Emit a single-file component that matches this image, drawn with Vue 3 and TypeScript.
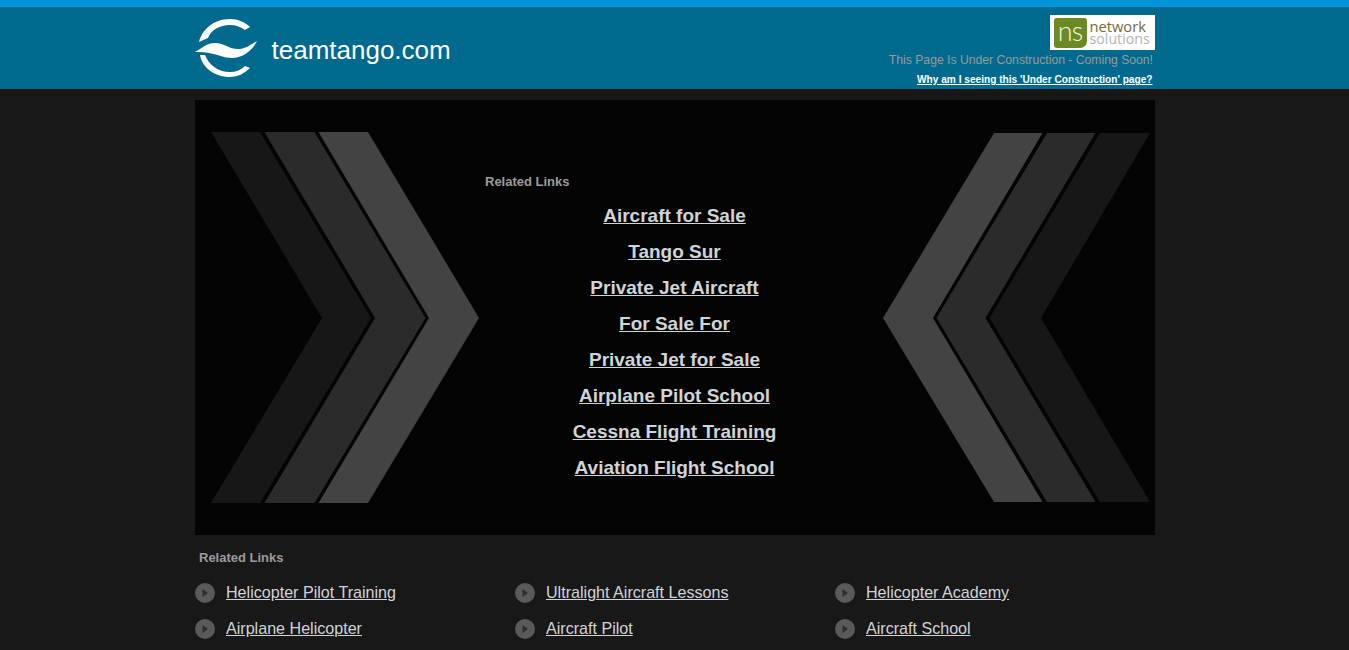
<script setup lang="ts">
interface Band {
  points: string
  fill: string
}

const mainLinks = [
  'Aircraft for Sale',
  'Tango Sur',
  'Private Jet Aircraft',
  'For Sale For',
  'Private Jet for Sale',
  'Airplane Pilot School',
  'Cessna Flight Training',
  'Aviation Flight School'
]

const footerLinks = [
  'Helicopter Pilot Training',
  'Ultralight Aircraft Lessons',
  'Helicopter Academy',
  'Airplane Helicopter',
  'Aircraft Pilot',
  'Aircraft School'
]

// coordinates are relative to each side column of the panel
const leftBands: Band[] = [
  { points: '16,32 65,32 176,218 65,403 16,403 127,218', fill: '#171717' },
  { points: '69.5,32 119.5,32 230.5,218 119.5,403 69.5,403 180,218', fill: '#2b2b2b' },
  { points: '123.5,32 173,32 284,218 173,403 123.5,403 234,218', fill: '#434343' }
]

const rightBands: Band[] = [
  { points: '129,33 177.5,33 68,218 177.5,402 129,402 18,218', fill: '#434343' },
  { points: '182,33 230.5,33 120.5,218 230.5,402 182,402 71.5,218', fill: '#2b2b2b' },
  { points: '235,33 285,33 176,218 285,402 235,402 124.5,218', fill: '#171717' }
]
</script>

<template>
  <div class="page">
    <header class="top">
      <div class="wrap top-inner">
        <div class="brand">
          <svg class="brand-mark" width="64" height="66" viewBox="0 0 64 66">
            <path d="M55 12 C50 7 43 4 35 4 C18 4 7 15 4 27 C7 26 10 24 13 23 C16 15 25 10 35 10 C41 10 46 12 50 15 Z" fill="#fff" />
            <path d="M0 37 C7 33 12 28 20 28 C30 28 35 35 45 34 C52 33 57 29 62 26 C58 35 48 43 37 43 C27 43 18 36 0 37 Z" fill="#fff" />
            <path d="M5 40 C7 52 19 62 35 62 C43 62 50 58 55 53 L50 51 C46 55 41 57 35 57 C23 57 14 50 10 40 Z" fill="#fff" />
          </svg>
          <span class="brand-name">teamtango.com</span>
        </div>
        <div class="notice">
          <div class="ns-logo">
            <span class="ns-mark">ns</span>
            <span class="ns-words">
              <span class="ns-top">network</span>
              <span class="ns-bottom">solutions</span>
            </span>
          </div>
          <p class="notice-text">This Page Is Under Construction - Coming Soon!</p>
          <a class="notice-link" href="#">Why am I seeing this 'Under Construction' page?</a>
        </div>
      </div>
    </header>

    <main class="wrap">
      <section class="panel">
        <svg class="chevrons" width="290" height="435" viewBox="0 0 290 435">
          <polygon v-for="band in leftBands" :key="band.fill" :points="band.points" :fill="band.fill" />
        </svg>
        <div class="center">
          <h2 class="heading">Related Links</h2>
          <ul class="main-links">
            <li v-for="link in mainLinks" :key="link">
              <a href="#">{{ link }}</a>
            </li>
          </ul>
        </div>
        <svg class="chevrons" width="290" height="435" viewBox="0 0 290 435">
          <polygon v-for="band in rightBands" :key="band.fill" :points="band.points" :fill="band.fill" />
        </svg>
      </section>

      <section class="related">
        <h2 class="heading related-heading">Related Links</h2>
        <ul class="footer-links">
          <li v-for="link in footerLinks" :key="link">
            <svg width="20" height="20" viewBox="0 0 20 20">
              <circle cx="10" cy="10" r="10" fill="#5a5a5a" />
              <path d="M7.5 6 L13 10 L7.5 14 Z" fill="#2e2e2e" />
            </svg>
            <a href="#">{{ link }}</a>
          </li>
        </ul>
      </section>
    </main>
  </div>
</template>

<style>
html,
body {
  background: #181818;
  overflow: hidden;
}
</style>

<style scoped>
.page {
  font-family: "Liberation Sans", Arial, sans-serif;
  height: 650px;
  overflow: hidden;
}

.wrap {
  width: 960px;
  margin: 0 auto;
}

.top {
  background: #006a8e;
  border-top: 7px solid #0094d9;
  height: 82px;
}

.top-inner {
  display: flex;
  justify-content: space-between;
  height: 100%;
}

.brand {
  display: flex;
  align-items: flex-start;
  gap: 13px;
  padding-top: 8px;
}

.brand-mark {
  display: block;
}

.brand-name {
  color: #fff;
  font-size: 26px;
  line-height: 30px;
  margin-top: 20px;
}

.notice {
  display: flex;
  flex-direction: column;
  align-items: flex-end;
  padding-top: 8px;
}

.ns-logo {
  display: flex;
  align-items: center;
  gap: 3px;
  width: 105px;
  height: 35px;
  box-sizing: border-box;
  padding: 2px 4px;
  background: #fff;
}

.ns-mark {
  width: 33px;
  height: 30px;
  background: #6b8a24;
  border-radius: 3px 3px 7px 3px;
  color: #f4f4e8;
  font-family: "Lato", sans-serif;
  font-size: 27px;
  font-weight: 300;
  line-height: 26px;
  letter-spacing: -1px;
  text-align: center;
}

.ns-words {
  display: flex;
  flex-direction: column;
  font-family: "Open Sans", sans-serif;
  font-size: 14.7px;
  line-height: 12.5px;
}

.ns-top {
  color: #75693c;
}

.ns-bottom {
  color: #b4b4b4;
  font-size: 14.2px;
}

.notice-text {
  margin: 3px 1.5px 0 0;
  color: #9a9a9a;
  font-size: 12.2px;
  line-height: 14px;
}

.notice-link {
  margin: 6px 2px 0 0;
  color: #fff;
  font-size: 10.15px;
  font-weight: bold;
  line-height: 14px;
}

.panel {
  display: grid;
  grid-template-columns: 290px 380px 290px;
  height: 435px;
  margin-top: 11px;
  background: #040404;
}

.chevrons {
  display: block;
}

.center {
  padding-top: 75px;
}

.heading {
  margin: 0 0 0 0.5px;
  color: #9c9c9c;
  font-size: 13px;
  font-weight: bold;
  line-height: 14px;
}

.main-links {
  list-style: none;
  margin: 9px 0 0;
  padding: 0;
  text-align: center;
}

.main-links li {
  height: 36px;
  line-height: 36px;
}

.main-links a {
  color: #d0d4d8;
  font-size: 19px;
  font-weight: bold;
}

.related {
  padding-top: 16px;
}

.related-heading {
  margin-left: 4.5px;
}

.footer-links {
  display: grid;
  grid-template-columns: repeat(3, 320px);
  grid-auto-rows: 36px;
  list-style: none;
  margin: 9px 0 0;
  padding: 0;
}

.footer-links li {
  display: flex;
  align-items: center;
  gap: 11.5px;
}

.footer-links svg {
  margin-top: 1px;
}

.footer-links a {
  color: #d0d4d8;
  font-size: 16.1px;
  line-height: 20px;
}
</style>
